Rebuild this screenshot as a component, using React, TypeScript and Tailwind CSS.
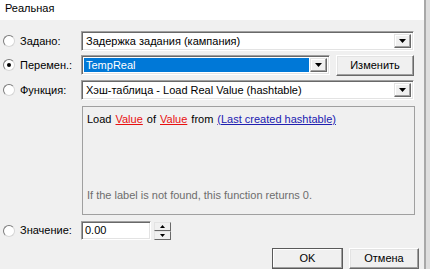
import type { ReactNode } from 'react';

const font = { fontFamily: '"Liberation Sans", Arial, sans-serif' };

function Radio({ checked }: { checked?: boolean }) {
  return (
    <span className="w-[12px] h-[12px] rounded-full bg-white border border-t-[#7a7a7a] border-l-[#7a7a7a] border-r-[#d6d6d6] border-b-[#d6d6d6] flex items-center justify-center shrink-0">
      {checked && <span className="w-[4px] h-[4px] rounded-full bg-black" />}
    </span>
  );
}

function Label({ children, checked }: { children: ReactNode; checked?: boolean }) {
  return (
    <div className="w-[78px] flex items-center gap-[5px] shrink-0">
      <Radio checked={checked} />
      <span>{children}</span>
    </div>
  );
}

function Arrow() {
  return (
    <svg width="7" height="4" viewBox="0 0 7 4">
      <path d="M0 0h7L3.5 4z" fill="#000" />
    </svg>
  );
}

function DropBtn() {
  return (
    <div className="w-[17px] h-full bg-[#f0f0f0] border border-t-[#e3e3e3] border-l-[#e3e3e3] border-r-[#696969] border-b-[#696969] shadow-[inset_-1px_-1px_0_#a0a0a0,inset_1px_1px_0_#ffffff] flex items-center justify-center shrink-0">
      <Arrow />
    </div>
  );
}

function Combo({ text, selected, width }: { text: string; selected?: boolean; width: string }) {
  return (
    <div
      className={`${width} h-[20px] bg-white border border-t-[#a0a0a0] border-l-[#a0a0a0] border-r-white border-b-white shadow-[inset_1px_1px_0_#696969,inset_-1px_-1px_0_#e3e3e3] flex p-[2px] gap-[1px]`}
    >
      {selected ? (
        <div className="flex-1 bg-[#0078d7] text-white flex items-center px-[2px]">{text}</div>
      ) : (
        <div className="flex-1 flex items-center px-[2px] whitespace-nowrap overflow-hidden">{text}</div>
      )}
      <DropBtn />
    </div>
  );
}

function PushBtn({ children, width, strong }: { children: ReactNode; width: string; strong?: boolean }) {
  return (
    <div
      className={`${width} h-[21px] bg-[#f0f0f0] border ${
        strong
          ? 'border-[#5a5a5a] shadow-[inset_-1px_-1px_0_#a0a0a0,inset_1px_1px_0_#ffffff]'
          : 'border-t-white border-l-white border-r-[#696969] border-b-[#696969] shadow-[inset_-1px_-1px_0_#a0a0a0,inset_1px_1px_0_#e3e3e3]'
      } flex items-center justify-center shrink-0`}
    >
      {children}
    </div>
  );
}

export default function App() {
  return (
    <div className="w-[430px] h-[269px] flex overflow-hidden text-[11px] text-black" style={font}>
      <div className="w-[424px] flex flex-col bg-[#f0f0f0]">
        <div className="h-[22px] bg-white pl-[5px] pt-[1px] text-[11px] leading-[14px]">Реальная</div>

        <div className="flex-1 flex flex-col pt-[11px] pl-[3px]">
          <div className="flex items-center h-[20px]">
            <Label>Задано:</Label>
            <Combo width="w-[333px]" text="Задержка задания (кампания)" />
          </div>

          <div className="flex items-center h-[20px] mt-[4px]">
            <Label checked>Перемен.:</Label>
            <Combo width="w-[249px]" text="TempReal" selected />
            <div className="ml-[6px]">
              <PushBtn width="w-[78px]">Изменить</PushBtn>
            </div>
          </div>

          <div className="flex items-center h-[20px] mt-[5px]">
            <Label>Функция:</Label>
            <Combo width="w-[333px]" text="Хэш-таблица - Load Real Value (hashtable)" />
          </div>

          <div className="ml-[79px] mt-[6px] w-[333px] h-[109px] border border-[#a0a0a0] flex flex-col justify-between pt-[5px] pb-[12px] px-[4px]">
            <div className="flex gap-[4px] leading-[14px]">
              <span>Load</span>
              <span className="text-[#e81010] underline">Value</span>
              <span>of</span>
              <span className="text-[#e81010] underline">Value</span>
              <span>from</span>
              <span className="text-[#2020b0] underline">(Last created hashtable)</span>
            </div>
            <div className="text-[#6d6d6d] text-[11px] leading-[14px]">
              If the label is not found, this function returns 0.
            </div>
          </div>

          <div className="flex items-center h-[19px] mt-[6px]">
            <Label>Значение:</Label>
            <div className="w-[70px] h-[19px] bg-white border border-t-[#a0a0a0] border-l-[#a0a0a0] border-r-white border-b-white shadow-[inset_1px_1px_0_#696969,inset_-1px_-1px_0_#e3e3e3] flex items-center px-[3px]">
              0.00
            </div>
            <div className="ml-[3px] w-[17px] h-[18px] flex flex-col">
              <div className="flex-1 bg-[#f0f0f0] border border-t-[#e3e3e3] border-l-[#e3e3e3] border-r-[#696969] border-b-[#696969] flex items-center justify-center">
                <svg width="5" height="3" viewBox="0 0 5 3">
                  <path d="M2.5 0L5 3H0z" fill="#000" />
                </svg>
              </div>
              <div className="flex-1 bg-[#f0f0f0] border border-t-[#e3e3e3] border-l-[#e3e3e3] border-r-[#696969] border-b-[#696969] flex items-center justify-center">
                <svg width="5" height="3" viewBox="0 0 5 3">
                  <path d="M0 0h5L2.5 3z" fill="#000" />
                </svg>
              </div>
            </div>
          </div>

          <div className="flex justify-end gap-[6px] mt-[8px] pr-[5px]">
            <PushBtn width="w-[71px]" strong>OK</PushBtn>
            <PushBtn width="w-[70px]">Отмена</PushBtn>
          </div>
        </div>
      </div>
      <div className="w-[2px] bg-[#a8a8a8]" />
      <div className="flex-1 bg-[#dedede]" />
    </div>
  );
}
